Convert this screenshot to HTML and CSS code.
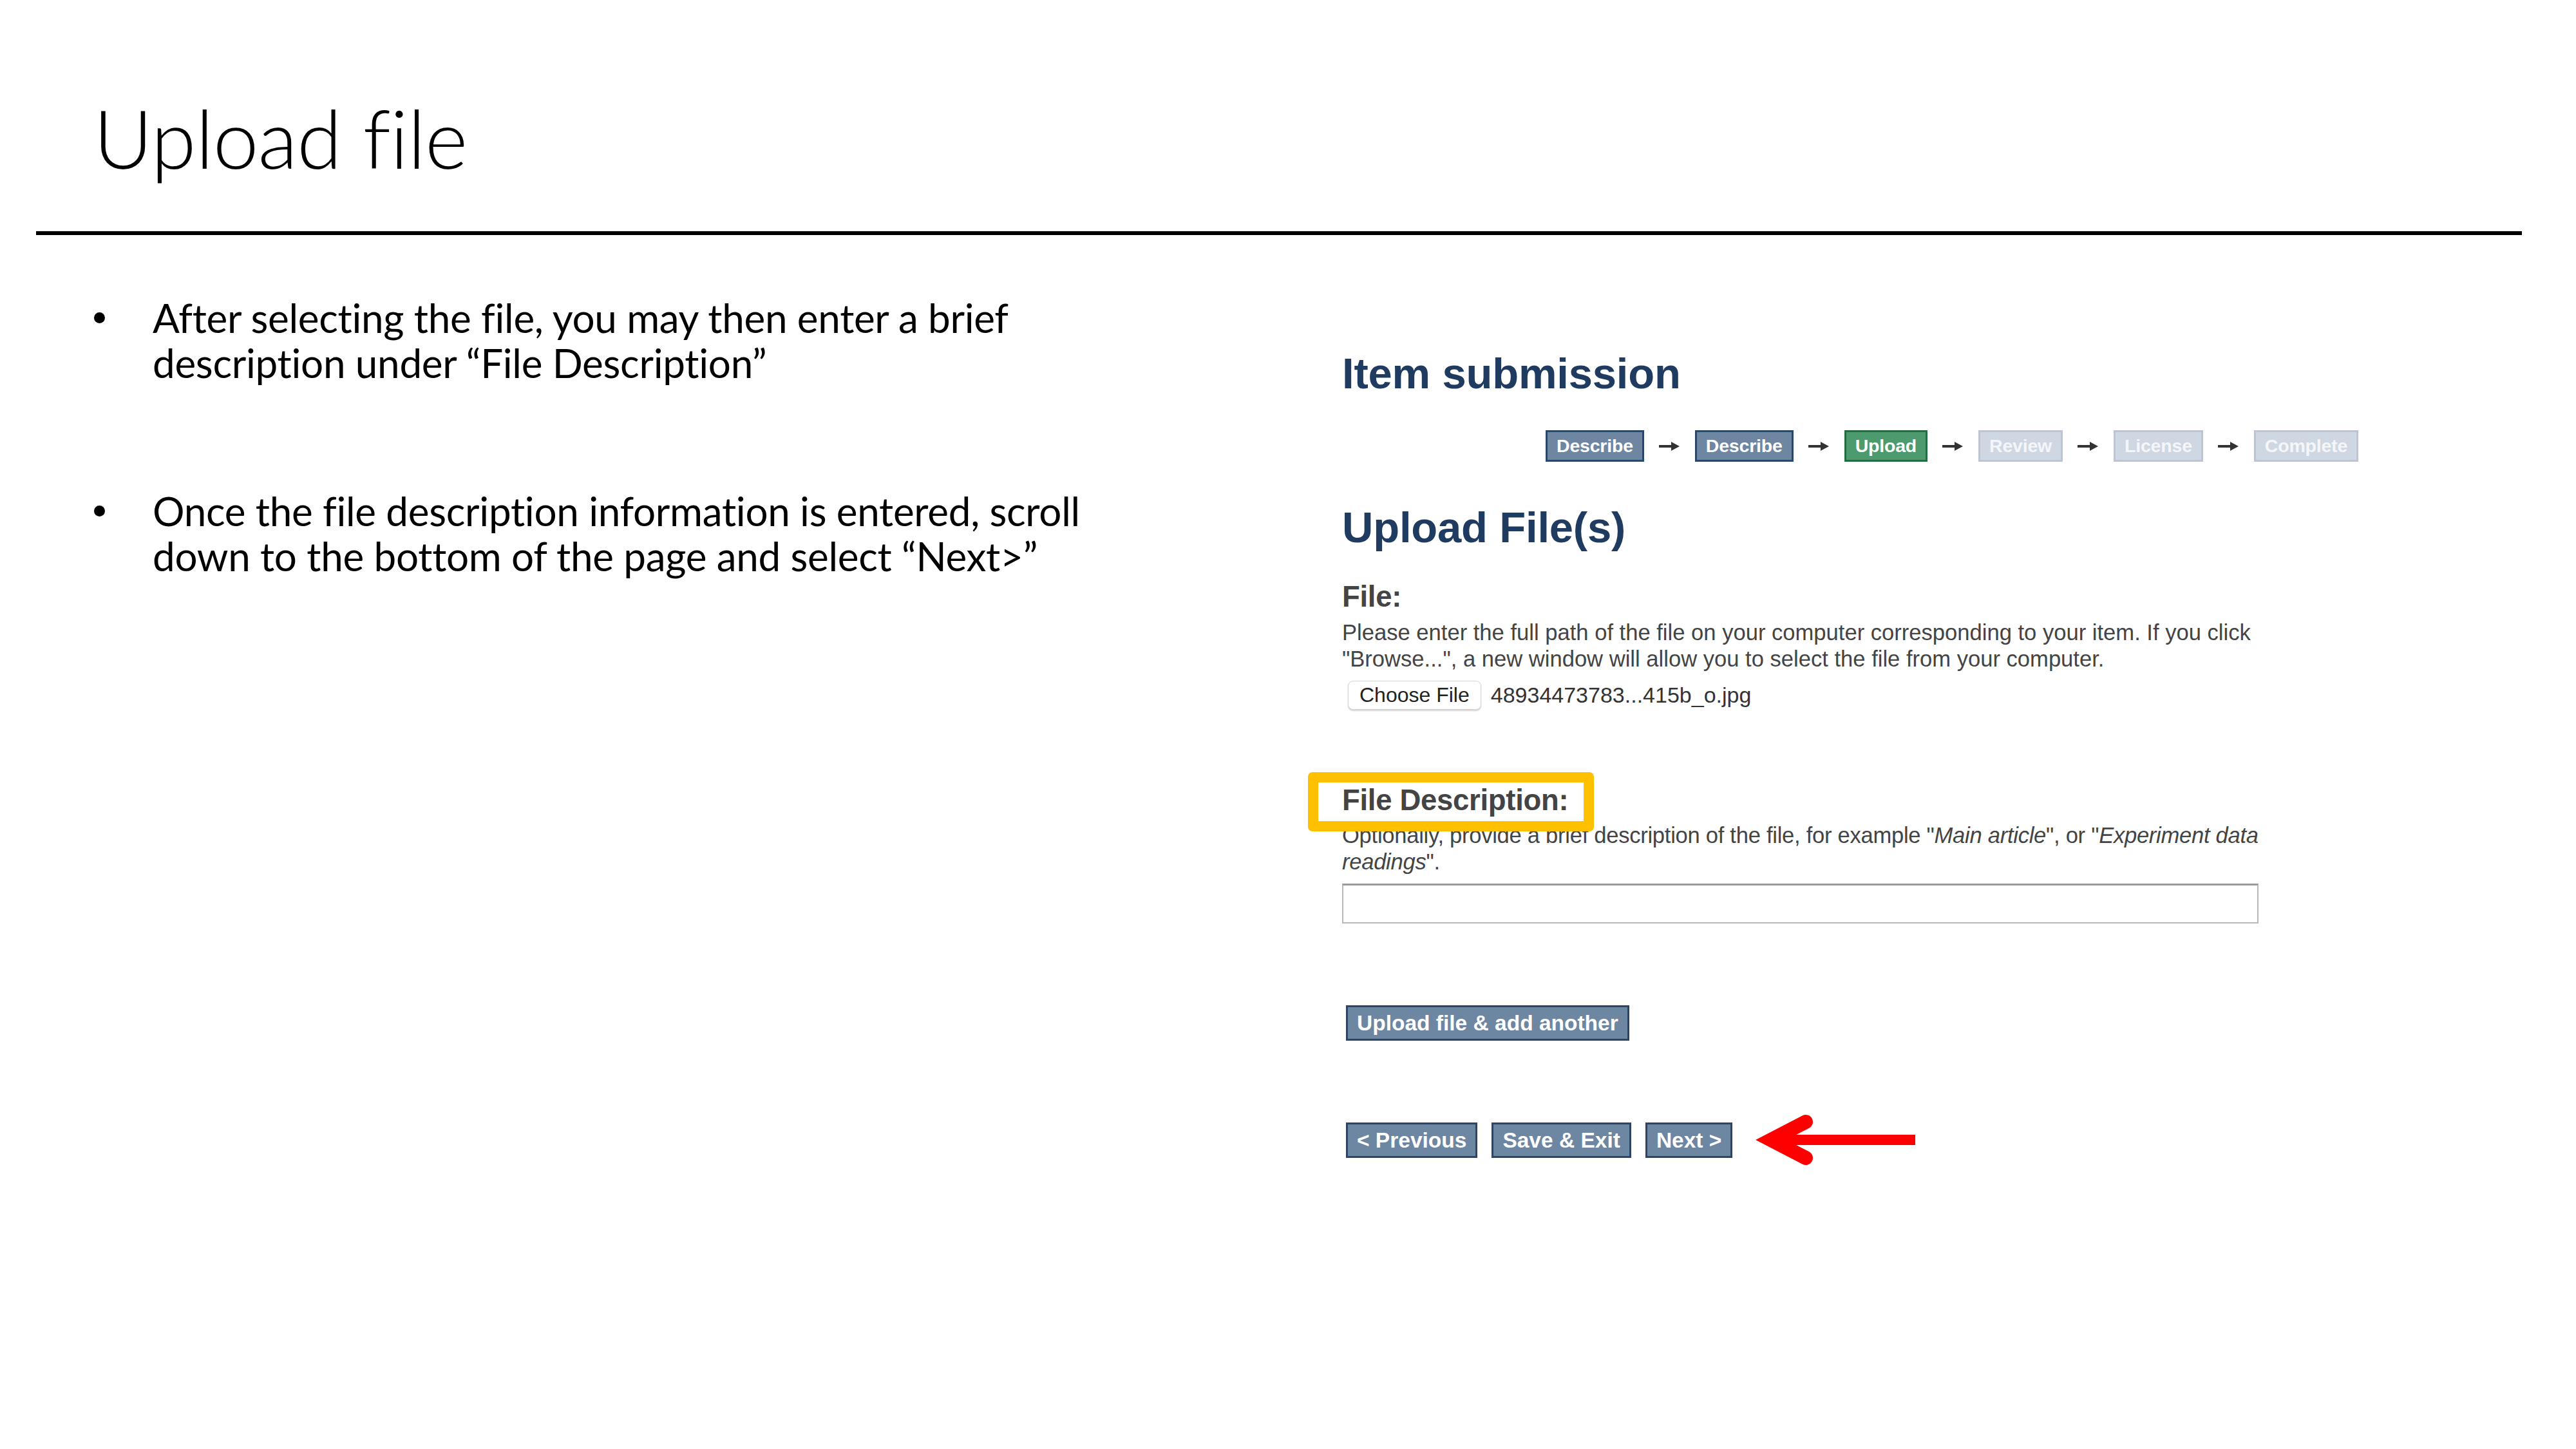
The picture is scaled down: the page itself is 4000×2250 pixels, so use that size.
FILE: index.html
```html
<!DOCTYPE html>
<html lang="en">
<head>
<meta charset="utf-8">
<title>Upload file</title>
<link rel="stylesheet" href="styles.css">
</head>
<body>
<div class="slide">
  <header class="head">
    <h1 class="title">Upload file</h1>
  </header>
  <div class="rule"></div>
  <main class="content">
    <ul class="bullets">
      <li class="bullet">
        <span class="dot"></span>
        <span class="btext">After selecting the file, you may then enter a brief<br>description under “File Description”</span>
      </li>
      <li class="bullet">
        <span class="dot"></span>
        <span class="btext">Once the file description information is entered, scroll<br>down to the bottom of the page and select “Next&gt;”</span>
      </li>
    </ul>

    <section class="shot">
      <h2 class="ds-h1">Item submission</h2>
      <div class="progress">
        <span class="step step-done">Describe</span>
        <svg class="parrow" width="32" height="20" viewBox="0 0 32 20"><path d="M0 10H24" stroke="#333" stroke-width="4"/><path d="M19 3L32 10L19 17Z" fill="#333"/></svg>
        <span class="step step-done">Describe</span>
        <svg class="parrow" width="32" height="20" viewBox="0 0 32 20"><path d="M0 10H24" stroke="#333" stroke-width="4"/><path d="M19 3L32 10L19 17Z" fill="#333"/></svg>
        <span class="step step-current">Upload</span>
        <svg class="parrow" width="32" height="20" viewBox="0 0 32 20"><path d="M0 10H24" stroke="#333" stroke-width="4"/><path d="M19 3L32 10L19 17Z" fill="#333"/></svg>
        <span class="step step-todo">Review</span>
        <svg class="parrow" width="32" height="20" viewBox="0 0 32 20"><path d="M0 10H24" stroke="#333" stroke-width="4"/><path d="M19 3L32 10L19 17Z" fill="#333"/></svg>
        <span class="step step-todo">License</span>
        <svg class="parrow" width="32" height="20" viewBox="0 0 32 20"><path d="M0 10H24" stroke="#333" stroke-width="4"/><path d="M19 3L32 10L19 17Z" fill="#333"/></svg>
        <span class="step step-todo">Complete</span>
      </div>

      <h2 class="ds-h2">Upload File(s)</h2>

      <h3 class="ds-label ds-label-file">File:</h3>
      <p class="ds-help">Please enter the full path of the file on your computer corresponding to your item. If you click<br>"Browse...", a new window will allow you to select the file from your computer.</p>
      <div class="filerow">
        <span class="choose">Choose File</span>
        <span class="fname">48934473783...415b_o.jpg</span>
      </div>

      <h3 class="ds-label ds-label-desc">File Description:</h3>
      <p class="ds-help ds-help-desc">Optionally, provide a brief description of the file, for example "<i>Main article</i>", or "<i>Experiment data<br>readings</i>".</p>
      <div class="textbox"></div>

      <div class="btnrow btnrow-upload">
        <span class="btn">Upload file &amp; add another</span>
      </div>

      <div class="btnrow btnrow-nav">
        <span class="btn">&lt; Previous</span>
        <span class="btn">Save &amp; Exit</span>
        <span class="btn">Next &gt;</span>
        <svg class="redarrow" width="250" height="80" viewBox="0 0 250 80">
          <rect x="20" y="32" width="228" height="16" fill="#ff0000"/>
          <polyline points="78,12 24,40 78,68" fill="none" stroke="#ff0000" stroke-width="22" stroke-linecap="round" stroke-linejoin="miter" stroke-miterlimit="10"/>
        </svg>
      </div>

      <div class="highlight"></div>
    </section>
  </main>
</div>
</body>
</html>
```
FILE: styles.css
```css
html, body {
  margin: 0;
  padding: 0;
  background: #ffffff;
}

.slide {
  width: 4000px;
  height: 2250px;
  overflow: hidden;
  background: #ffffff;
  color: #000000;
  font-family: Lato, "Open Sans", "Liberation Sans", sans-serif;
}

/* ---------- slide title ---------- */
.head {
  height: 359px;
  box-sizing: border-box;
  padding: 137px 0 0 145px;
}

.title {
  margin: 0;
  font-family: Lato, "Open Sans", sans-serif;
  font-weight: 300;
  font-size: 127px;
  line-height: 1.2;
  letter-spacing: -1px;
  white-space: nowrap;
}

.rule {
  height: 6px;
  margin: 0 84px 0 56px;
  background: #000000;
}

/* ---------- content ---------- */
.content {
  display: grid;
  grid-template-columns: 2084px 1fr;
}

.bullets {
  list-style: none;
  margin: 0;
  padding: 93px 0 0 0;
}

.bullet {
  display: flex;
  align-items: flex-start;
  margin-bottom: 160px;
}

.dot {
  flex: none;
  width: 17px;
  height: 17px;
  border-radius: 50%;
  background: #000000;
  margin: 27px 74px 0 146px;
}

.btext {
  font-family: Lato, "Open Sans", sans-serif;
  font-size: 62px;
  line-height: 70px;
  white-space: nowrap;
  letter-spacing: -0.3px;
}

/* ---------- embedded DSpace screenshot ---------- */
.shot {
  position: relative;
  font-family: "Liberation Sans", Arial, Helvetica, sans-serif;
  color: #3d3d3d;
  padding-top: 175px;
}

.ds-h1,
.ds-h2 {
  margin: 0;
  font-size: 67px;
  line-height: 80px;
  font-weight: bold;
  color: #1f3b60;
  letter-spacing: -0.2px;
}

.progress {
  display: flex;
  align-items: center;
  margin: 48px 0 0 316px;
  height: 49px;
}

.step {
  box-sizing: border-box;
  height: 49px;
  padding: 0 14px;
  border: 3px solid;
  font-size: 28.5px;
  line-height: 43px;
  font-weight: bold;
  color: #ffffff;
  letter-spacing: -0.2px;
}

.step-done {
  background: #6e86a2;
  border-color: #2a4668;
}

.step-current {
  background: #4c9a6d;
  border-color: #246c42;
}

.step-todo {
  background: #cfd7e2;
  border-color: #bcc5d1;
  color: #f4f6f9;
}

.parrow {
  flex: none;
  margin: 0 24px 0 23px;
}

.ds-h2 {
  margin-top: 62px;
}

.ds-label {
  margin: 0;
  font-size: 45.5px;
  line-height: 50px;
  font-weight: bold;
  color: #444444;
  letter-spacing: -0.3px;
}

.ds-label-file {
  margin-top: 43px;
}

.ds-help {
  margin: 10px 0 0 0;
  font-size: 34.6px;
  line-height: 41px;
  color: #444444;
  white-space: nowrap;
}

.filerow {
  display: flex;
  align-items: center;
  margin: 13px 0 0 9px;
  height: 45px;
}

.choose {
  box-sizing: border-box;
  height: 45px;
  padding: 0 17px;
  border: 1px solid #d6d6d6;
  border-radius: 8px;
  background: #ffffff;
  box-shadow: 0 2px 2px rgba(0, 0, 0, 0.18);
  font-size: 32px;
  line-height: 43px;
  color: #222222;
}

.fname {
  margin-left: 15px;
  font-size: 34px;
  color: #333333;
}

.ds-label-desc {
  margin-top: 116px;
}

.ds-help-desc {
  margin-top: 9px;
  letter-spacing: -0.28px;
}

.textbox {
  box-sizing: border-box;
  width: 1423px;
  height: 62px;
  margin-top: 13px;
  border: 2px solid #b8b8b8;
  border-top: 3px solid #9a9a9a;
  background: #ffffff;
}

.btnrow {
  display: flex;
  align-items: center;
  gap: 22px;
  margin-left: 6px;
}

.btnrow-upload {
  margin-top: 127px;
}

.btnrow-nav {
  margin-top: 114px;
}

.btn {
  box-sizing: border-box;
  height: 55px;
  padding: 0 14px;
  border: 3px solid #2c4566;
  background: #6d86a2;
  font-size: 33.5px;
  line-height: 49px;
  font-weight: bold;
  color: #ffffff;
  white-space: nowrap;
}

.redarrow {
  flex: none;
  margin-left: 14px;
}

/* yellow call-out box drawn over the screenshot */
.highlight {
  position: absolute;
  left: -53px;
  top: 834px;
  width: 444px;
  height: 92px;
  box-sizing: border-box;
  border: 16px solid #ffc000;
  border-radius: 7px;
}
```
